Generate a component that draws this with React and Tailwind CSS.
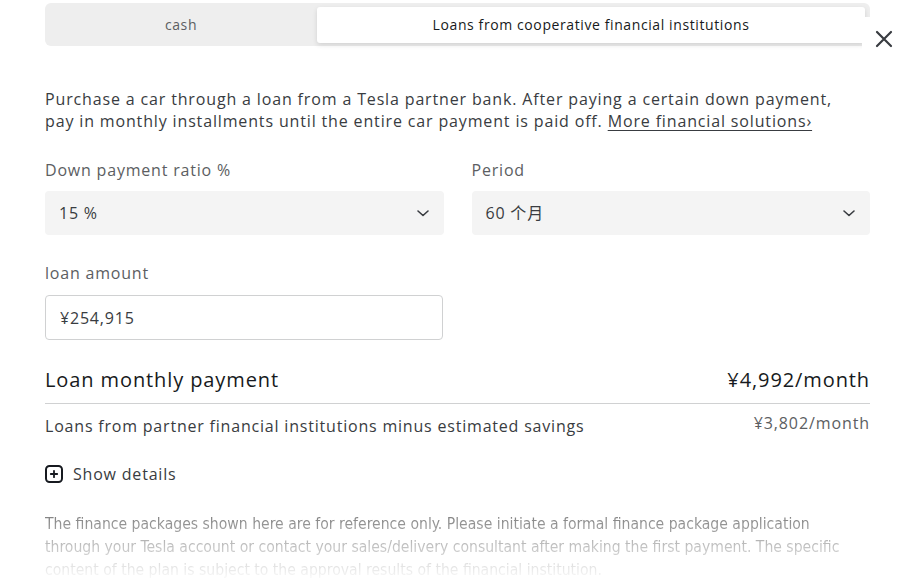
import React, { useState } from 'react';

const font = { fontFamily: '"Open Sans", "Noto Sans CJK SC", sans-serif' };

const Chevron = () => (
  <svg width="16" height="16" viewBox="0 0 16 16" fill="none" stroke="#393c41" strokeWidth="1.6" strokeLinecap="round" strokeLinejoin="round">
    <path d="M3 6l5 4.5L13 6" />
  </svg>
);

const SelectBox = ({ label, value }) => (
  <div className="flex flex-col">
    <label className="text-[16px] leading-[22px] tracking-[0.8px] text-[#5c5e62] mb-[10px] mt-[-1px]">{label}</label>
    <div className="h-[44px] bg-[#f4f4f4] rounded-[4px] flex items-center justify-between pl-[14px] pr-[13px]">
      <span className="text-[16px] tracking-[0.8px] text-[#393c41]">{value}</span>
      <Chevron />
    </div>
  </div>
);

const App = () => {
  const [tab, setTab] = useState('loan');

  return (
    <div className="w-[918px] h-[578px] overflow-hidden bg-white relative" style={font}>
      <div className="pl-[45px] pr-[48px] pt-[3px]">
        <div className="h-[43px] bg-[#eeeeee] rounded-[6px] flex items-center pr-[5px]">
          <button
            onClick={() => setTab('cash')}
            className={`w-[272px] h-[36px] text-[14px] tracking-[0.6px] ${tab === 'cash' ? 'bg-white shadow text-[#171a20]' : 'text-[#5c5e62]'}`}
          >
            cash
          </button>
          <button
            onClick={() => setTab('loan')}
            className={`flex-1 h-[36px] rounded-[3px] text-[14px] tracking-[0.6px] ${tab === 'loan' ? 'bg-white shadow-[0_2px_5px_rgba(0,0,0,0.12)] text-[#171a20]' : 'text-[#5c5e62]'}`}
          >
            Loans from cooperative financial institutions
          </button>
        </div>

        <p className="mt-[42px] text-[16px] leading-[22px] tracking-[0.85px] text-[#393c41]">
          Purchase a car through a loan from a Tesla partner bank. After paying a certain down payment,<br />
          pay in monthly installments until the entire car payment is paid off.{' '}
          <a href="#" className="text-[#393c41] underline underline-offset-[3px] decoration-[#393c41]">More financial solutions›</a>
        </p>

        <div className="mt-[28px] grid grid-cols-2 gap-[28px]">
          <SelectBox label="Down payment ratio %" value="15 %" />
          <SelectBox label="Period" value="60 个月" />
        </div>

        <div className="mt-[27px] w-[398px]">
          <label className="block text-[16px] leading-[22px] tracking-[0.8px] text-[#5c5e62] mb-[11px]">loan amount</label>
          <input
            readOnly
            value="¥254,915"
            className="w-full h-[45px] border border-[#d0d1d2] rounded-[4px] px-[14px] text-[16px] tracking-[0.8px] text-[#393c41] outline-none"
          />
        </div>

        <div className="mt-[26px] flex items-center justify-between pb-[10px] border-b border-[#d0d1d2]">
          <span className="text-[20px] leading-[27px] tracking-[0.9px] text-[#171a20]">Loan monthly payment</span>
          <span className="text-[20px] leading-[27px] tracking-[0.9px] text-[#171a20]">¥4,992/month</span>
        </div>

        <div className="mt-[8px] flex justify-between">
          <span className="text-[16px] leading-[22px] tracking-[0.8px] text-[#393c41] mt-[3px]">Loans from partner financial institutions minus estimated savings</span>
          <span className="text-[16px] leading-[22px] tracking-[0.9px] text-[#5c5e62]">¥3,802/month</span>
        </div>

        <button className="mt-[25px] flex items-center gap-[10px] text-[16px] tracking-[0.8px] text-[#393c41]">
          <svg width="18" height="18" viewBox="0 0 18 18" fill="none">
            <rect x="1" y="1" width="16" height="16" rx="3.5" stroke="#171a20" strokeWidth="2" />
            <path d="M9 5.8v6.4M5.8 9h6.4" stroke="#171a20" strokeWidth="1.8" strokeLinecap="round" />
          </svg>
          Show details
        </button>

        <p
          className="mt-[27px] text-[15.6px] leading-[23px] bg-gradient-to-b from-[#7d7d7d] via-[#c4c4c4] to-[#ffffff] bg-clip-text text-transparent"
          style={{ fontFamily: '"DejaVu Sans Condensed", "DejaVu Sans", sans-serif', fontStretch: 'condensed' }}
        >
          The finance packages shown here are for reference only. Please initiate a formal finance package application<br />
          through your Tesla account or contact your sales/delivery consultant after making the first payment. The specific<br />
          content of the plan is subject to the approval results of the financial institution.
        </p>
      </div>

      <button className="absolute left-[862px] top-[17px] w-[44px] h-[44px] bg-white flex items-center justify-center">
        <svg width="18" height="18" viewBox="0 0 18 18" fill="none" stroke="#393c41" strokeWidth="2.2" strokeLinecap="round">
          <path d="M2 2l14 14M16 2L2 16" />
        </svg>
      </button>
    </div>
  );
};

export default App;
